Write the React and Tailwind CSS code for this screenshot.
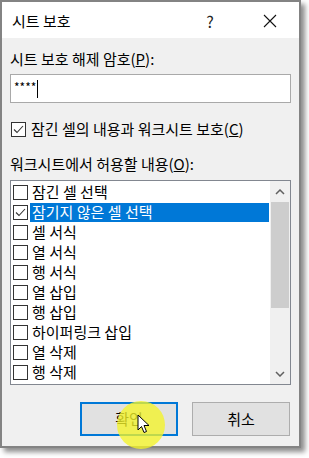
import { useState } from 'react';

const items = [
  { label: '잠긴 셀 선택', checked: false },
  { label: '잠기지 않은 셀 선택', checked: true, selected: true },
  { label: '셀 서식', checked: false },
  { label: '열 서식', checked: false },
  { label: '행 서식', checked: false },
  { label: '열 삽입', checked: false },
  { label: '행 삽입', checked: false },
  { label: '하이퍼링크 삽입', checked: false },
  { label: '열 삭제', checked: false },
  { label: '행 삭제', checked: false },
];

function Check({ checked }) {
  return (
    <span className="w-[15px] h-[15px] shrink-0 border border-[#333] bg-white flex items-center justify-center">
      {checked && (
        <svg width="11" height="9" viewBox="0 0 11 9" fill="none">
          <path d="M1 4.5 L4 7.5 L10 1" stroke="#333" strokeWidth="1.1" />
        </svg>
      )}
    </span>
  );
}

export default function App() {
  const [list] = useState(items);

  return (
    <div
      className="relative w-[309px] h-[458px] bg-white text-black text-[15px] leading-[20px]"
      style={{ fontFamily: '"Noto Sans CJK KR", "Noto Sans", sans-serif' }}
    >
      <div className="w-[301px] h-[448px] border-2 border-[#838383] bg-[#f0f0f0] flex flex-col shadow-[4px_4px_5px_rgba(0,0,0,0.45)]">
        {/* title bar */}
        <div className="h-[36px] bg-white flex items-center pl-[10px] pt-[2px] shrink-0">
          <span className="flex-1">시트 보호</span>
          <span className="w-[14px] text-center mr-[46px] text-[16px] text-[#222]">?</span>
          <svg width="14" height="14" viewBox="0 0 14 14" className="mr-[22px]">
            <path d="M1 1 L13 13 M13 1 L1 13" stroke="#111" strokeWidth="1.1" />
          </svg>
        </div>

        <div className="flex flex-col px-[8px] pt-[11px]">
          <div>
            시트 보호 해제 암호(<span className="underline">P</span>):
          </div>
          <div className="mt-[5px] h-[29px] w-[281px] bg-white border border-[#a9a9a9] flex items-center pl-[3px]">
            <span className="text-[12px] leading-none mt-[-4px]">****</span>
            <span className="w-px h-[18px] bg-black ml-[1px]" />
          </div>

          <div className="mt-[16px] flex items-center gap-[5px] pl-[1px]">
            <Check checked />
            <span>
              잠긴 셀의 내용과 워크시트 보호(<span className="underline">C</span>)
            </span>
          </div>

          <div className="mt-[15px]">
            워크시트에서 허용할 내용(<span className="underline">O</span>):
          </div>

          <div className="mt-[6px] w-[281px] h-[205px] bg-white border border-[#828790] flex">
            <div className="flex-1 flex flex-col pt-[1px] pl-[2px] pr-[1px]">
              {list.map((it) => (
                <div key={it.label} className="h-[20px] flex items-center shrink-0">
                  <Check checked={it.checked} />
                  <span
                    className={
                      it.selected
                        ? 'ml-[2px] flex-1 h-[19px] bg-[#0078d7] text-white pl-[2px] flex items-center'
                        : 'ml-[2px] pl-[2px]'
                    }
                  >
                    {it.label}
                  </span>
                </div>
              ))}
            </div>
            <div className="w-[20px] bg-[#f0f0f0] flex flex-col">
              <div className="h-[21px] flex items-center justify-center shrink-0">
                <svg width="10" height="6" viewBox="0 0 10 6">
                  <path d="M1 5 L5 1 L9 5" stroke="#606060" strokeWidth="1.5" fill="none" />
                </svg>
              </div>
              <div className="h-[106px] bg-[#cdcdcd] mx-[1px] shrink-0" />
              <div className="flex-1" />
              <div className="h-[21px] flex items-center justify-center shrink-0">
                <svg width="10" height="6" viewBox="0 0 10 6">
                  <path d="M1 1 L5 5 L9 1" stroke="#606060" strokeWidth="1.5" fill="none" />
                </svg>
              </div>
            </div>
          </div>

          <div className="mt-[17px] flex justify-end gap-[14px] pr-[1px]">
            <button className="w-[98px] h-[34px] bg-[#e1e1e1] border-2 border-[#0078d7] flex items-center justify-center">
              확인
            </button>
            <button className="w-[98px] h-[34px] bg-[#e1e1e1] border border-[#adadad] flex items-center justify-center">
              취소
            </button>
          </div>
        </div>
      </div>

      {/* click highlight */}
      <div className="absolute left-[117px] top-[401px] w-[48px] h-[48px] rounded-full bg-[rgba(244,244,40,0.78)]" />
      {/* cursor */}
      <svg className="absolute left-[137px] top-[414px]" width="13" height="21" viewBox="0 0 13 21">
        <path
          d="M1 1 L1 16 L4.5 12.5 L7 18.5 L9.5 17.5 L7 11.5 L12 11.5 Z"
          fill="white"
          stroke="black"
          strokeWidth="1"
          strokeLinejoin="round"
        />
      </svg>
    </div>
  );
}
